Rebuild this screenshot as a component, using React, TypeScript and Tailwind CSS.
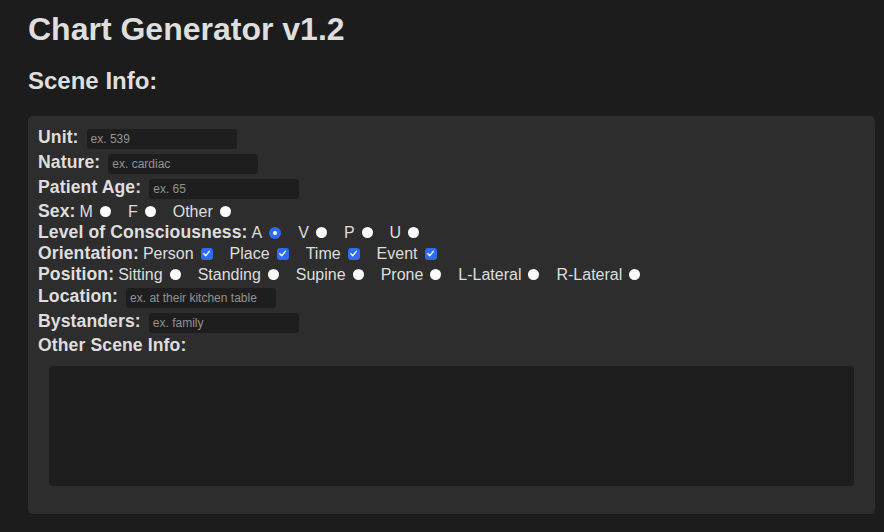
import React from "react";

const font = { fontFamily: '"Liberation Sans", Arial, Helvetica, sans-serif' };

function TextRow({ label, placeholder }: { label: string; placeholder: string }) {
  return (
    <div className="flex h-[25px] items-center">
      <span className="pb-[2px] text-[17.6px] font-bold leading-[21px] tracking-[0.1px] text-[#dedede]">{label}</span>
      <input
        type="text"
        placeholder={placeholder}
        className="ml-[8px] h-[20px] w-[150px] rounded-[3px] bg-[#1e1e1e] px-[4px] pt-[1px] text-[12px] text-[#dedede] outline-none placeholder:text-[#929292]"
        style={font}
      />
    </div>
  );
}

function Radio({ checked }: { checked?: boolean }) {
  if (checked) {
    return (
      <span className="ml-[7px] flex h-[12px] w-[12px] items-center justify-center rounded-full bg-[#2f6cf3]">
        <span className="h-[4px] w-[4px] rounded-full bg-white" />
      </span>
    );
  }
  return <span className="ml-[7px] h-[11px] w-[11px] rounded-full bg-white" />;
}

function Check() {
  return (
    <span className="ml-[7px] flex h-[12px] w-[12px] items-center justify-center rounded-[3px] bg-[#2f6cf3]">
      <svg width="9" height="9" viewBox="0 0 10 10" fill="none">
        <path d="M2 5.2 4.2 7.4 8.2 2.6" stroke="white" strokeWidth="1.6" strokeLinecap="round" strokeLinejoin="round" />
      </svg>
    </span>
  );
}

function OptionRow({
  label,
  options,
  kind,
  selected,
}: {
  label: string;
  options: string[];
  kind: "radio" | "check";
  selected?: string;
}) {
  return (
    <div className="flex h-[21px] items-center text-[#dedede]">
      <span className="text-[17.6px] font-bold leading-[21px] tracking-[0.1px]">{label}</span>
      {options.map((o, i) => (
        <span key={o} className={`flex items-center ${i === 0 ? "ml-[4px]" : "ml-[17px]"}`}>
          <span className="text-[16px] leading-[21px]">{o}</span>
          {kind === "check" ? <Check /> : <Radio checked={selected === o} />}
        </span>
      ))}
    </div>
  );
}

export default function App() {
  return (
    <div className="min-h-screen bg-[#1c1c1c] pb-[18px] pl-[28px] pr-[9px] pt-[11px]" style={font}>
      <h1 className="text-[32px] font-bold leading-[36px] text-[#dedede]">Chart Generator v1.2</h1>
      <h2 className="mt-[20px] text-[24px] font-bold leading-[28px] text-[#dedede]">Scene Info:</h2>
      <div className="mt-[21px] rounded-[5px] bg-[#2d2d2d] px-[10px] pb-[28px] pt-[10px]">
        <TextRow label="Unit:" placeholder="ex. 539" />
        <TextRow label="Nature:" placeholder="ex. cardiac" />
        <TextRow label="Patient Age:" placeholder="ex. 65" />
        <OptionRow label="Sex:" kind="radio" options={["M", "F", "Other"]} />
        <OptionRow label="Level of Consciousness:" kind="radio" selected="A" options={["A", "V", "P", "U"]} />
        <OptionRow label="Orientation:" kind="check" options={["Person", "Place", "Time", "Event"]} />
        <OptionRow
          label="Position:"
          kind="radio"
          options={["Sitting", "Standing", "Supine", "Prone", "L-Lateral", "R-Lateral"]}
        />
        <TextRow label="Location:" placeholder="ex. at their kitchen table" />
        <TextRow label="Bystanders:" placeholder="ex. family" />
        <div className="h-[21px] text-[17.6px] font-bold leading-[21px] tracking-[0.1px] text-[#dedede]">
          Other Scene Info:
        </div>
        <textarea className="mx-[11px] mt-[10px] block h-[120px] w-[calc(100%-22px)] resize-none rounded-[4px] bg-[#1e1e1e] outline-none" />
      </div>
    </div>
  );
}
